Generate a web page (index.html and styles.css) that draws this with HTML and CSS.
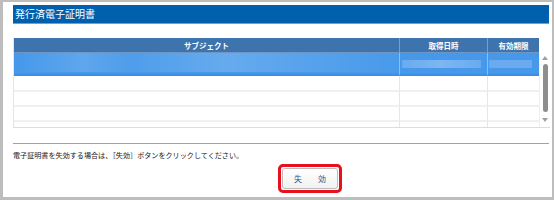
FILE: index.html
```html
<!DOCTYPE html>
<html lang="ja">
<head>
<meta charset="utf-8">
<link rel="stylesheet" href="styles.css">
</head>
<body>
<div class="frame">
  <div class="title-bar">発行済電子証明書</div>
  <div class="table-wrap">
    <div class="grid">
      <div class="hd">サブジェクト</div>
      <div class="hd">取得日時</div>
      <div class="hd">有効期限</div>
      <div class="row sel c1"><span class="blur b1"></span></div>
      <div class="row sel c2"><span class="blur b2"></span></div>
      <div class="row sel c3"><span class="blur b3"></span></div>
      <div class="row r16"></div><div class="row r16"></div><div class="row r16"></div>
      <div class="row r15"></div><div class="row r15"></div><div class="row r15"></div>
      <div class="row r15"></div><div class="row r15"></div><div class="row r15"></div>
      <div class="row last"></div><div class="row last"></div><div class="row last"></div>
    </div>
    <div class="scrollbar">
      <span class="arrow up"></span>
      <span class="thumb"></span>
      <span class="arrow down"></span>
    </div>
  </div>
  <div class="rule"></div>
  <p class="note">電子証明書を失効する場合は、［失効］ボタンをクリックしてください。</p>
  <div class="btn-row">
    <div class="highlight"><button class="btn">失　　効</button></div>
  </div>
</div>
</body>
</html>
```
FILE: styles.css
```css
* { box-sizing: border-box; }
html, body { margin: 0; padding: 0; background: #fff; }
body { font-family: "Noto Sans CJK JP", "Noto Sans", sans-serif; }
.frame {
  width: 554px;
  height: 200px;
  border-style: solid;
  border-color: #bdbdbd;
  border-width: 2px 2px 3px 3px;
  padding: 3px 0 0 10px;
  display: flex;
  flex-direction: column;
  overflow: hidden;
}
.title-bar {
  width: 536px;
  height: 19px;
  background: #0060ae;
  border-bottom: 1px solid #6e9fd6;
  color: #fff;
  font-size: 10px;
  line-height: 18px;
  padding-left: 2px;
}
.table-wrap {
  margin-top: 14px;
  width: 537px;
  height: 90px;
  display: flex;
  border-bottom: 1px solid #dcdcdc;
  border-left: 1px solid #e4e4e4;
}
.grid {
  width: 525px;
  display: grid;
  grid-template-columns: 385px 88px 52px;
  grid-template-rows: 15px 23px 16px 15px 15px 1fr;
}
.hd {
  background: #3e74ad;
  color: #fff;
  font-size: 7.5px;
  font-weight: bold;
  text-align: center;
  line-height: 15px;
  border-left: 1px solid #7d9ec4;
  border-bottom: 1px solid #6f95c2;
}
.hd:first-child { border-left: none; }
.row {
  border-left: 1px solid #e6e6e6;
  border-bottom: 2px solid #f0f0f0;
  background: #fff;
}
.row.c1, .row:nth-child(3n+4) { border-left: none; }
.row.last { border-bottom: none; }
.sel {
  background: #4598ea;
  border-bottom: 2px solid #3b8ee6;
  border-left-color: #8fbdf0;
  position: relative;
  overflow: hidden;
}
.blur { position: absolute; display: block; }
.b1 {
  left: 0; top: 0; right: 0; bottom: 2px;
  background:
    linear-gradient(90deg, rgba(255,255,255,0) 0%, rgba(255,255,255,0.14) 18%, rgba(255,255,255,0.05) 30%, rgba(255,255,255,0.18) 55%, rgba(255,255,255,0.1) 75%, rgba(255,255,255,0.02) 100%);
}
.b2 {
  left: 2px; top: 7px; width: 79px; height: 8px;
  background: linear-gradient(90deg, #6aabee, #7db6f1 50%, #6aabee);
}
.b3 {
  left: 1px; top: 7px; width: 43px; height: 8px;
  background: #6aabef;
}
.scrollbar {
  width: 12px;
  margin-top: 15px;
  background: #fff;
  border-left: 1px solid #f0f0f0;
  position: relative;
  display: flex;
  flex-direction: column;
  align-items: center;
}
.arrow { width: 0; height: 0; border-left: 3px solid transparent; border-right: 3px solid transparent; }
.arrow.up { margin-top: 3px; border-bottom: 4px solid #a0a0a0; }
.arrow.down { margin-top: 6px; border-top: 4px solid #a0a0a0; }
.thumb {
  margin-top: 4px;
  width: 5px;
  height: 48px;
  background: #8e8e8e;
  border-radius: 3px;
}
.rule {
  margin-top: 15px;
  width: 536px;
  height: 1px;
  background: #86a6d3;
}
.note {
  margin: 6px 0 0 0;
  font-size: 7.1px;
  line-height: 10px;
  color: #222;
}
.btn-row {
  margin-top: 4px;
  padding-left: 265px;
}
.highlight {
  width: 64px;
  height: 29px;
  border: 3px solid #e8101c;
  border-radius: 5px;
  padding: 1px;
}
.btn {
  display: block;
  width: 56px;
  height: 21px;
  border: 1px solid #bcbcbc;
  border-radius: 3px;
  background: linear-gradient(#ffffff, #f2f2f2);
  color: #2d5a8a;
  font-family: "Noto Sans CJK JP", sans-serif;
  font-size: 8px;
  padding: 0;
  line-height: 19px;
  text-align: center;
}
```
